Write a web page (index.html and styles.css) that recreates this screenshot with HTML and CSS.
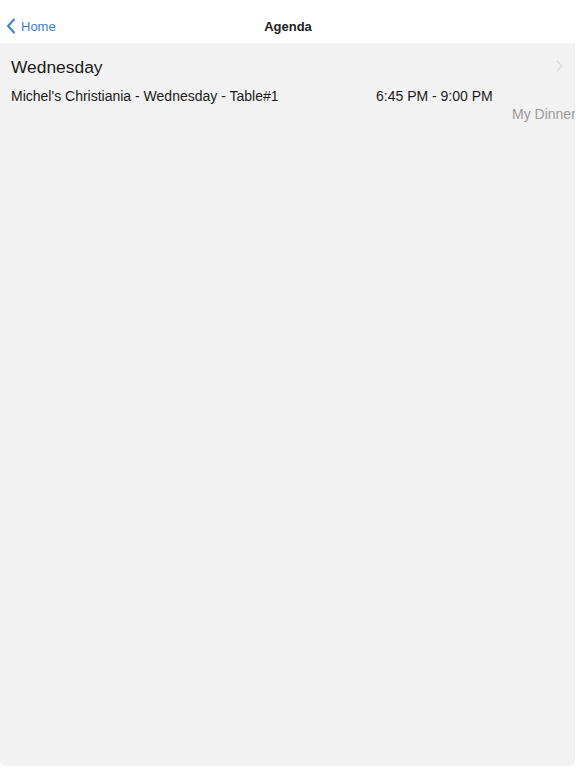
FILE: index.html
```html
<!DOCTYPE html>
<html>
<head>
<meta charset="utf-8">
<link rel="stylesheet" href="styles.css">
</head>
<body>
<div class="screen">
  <header class="nav">
    <div class="back">
      <svg class="chev" width="10" height="16" viewBox="0 0 10 16"><path d="M8 1.5 L2 8 L8 14.5" fill="none" stroke="#3b7fd0" stroke-width="2" stroke-linecap="round" stroke-linejoin="round"/></svg>
      <span>Home</span>
    </div>
    <div class="title">Agenda</div>
  </header>
  <main class="content">
    <div class="day">
      <span class="day-name">Wednesday</span>
      <svg class="disc" width="7" height="12" viewBox="0 0 7 12"><path d="M1 1 L6 6 L1 11" fill="none" stroke="#d4d4d4" stroke-width="1.2"/></svg>
    </div>
    <div class="item">
      <span class="item-name">Michel's Christiania - Wednesday - Table#1</span>
      <span class="item-time">6:45 PM - 9:00 PM</span>
    </div>
    <div class="tag">My Dinner</div>
  </main>
</div>
</body>
</html>
```
FILE: styles.css
```css
html, body { margin: 0; padding: 0; background: #fff; }
body { font-family: "Liberation Sans", Arial, sans-serif; width: 576px; height: 768px; overflow: hidden; }
.screen { display: flex; flex-direction: column; height: 768px; }
.nav { height: 43px; position: relative; display: flex; align-items: center; justify-content: center; background: #fff; flex: none; }
.back { position: absolute; left: 6px; top: 18px; display: flex; align-items: center; gap: 5px; color: #3b7fd0; font-size: 13px; }
.chev { display: block; }
.title { font-size: 13px; font-weight: bold; color: #222; margin-top: 10px; }
.content { flex: 1; background: #f2f2f2; width: 575px; margin-bottom: 2px; border-radius: 0 0 6px 6px; overflow: hidden; }
.day { display: flex; justify-content: space-between; align-items: center; padding: 14px 12px 0 11px; height: 20px; }
.day-name { font-size: 17.4px; color: #1a1a1a; }
.disc { display: block; margin-top: -2px; }
.item { display: flex; padding: 11px 0 0 11px; font-size: 14px; color: #1a1a1a; }
.item-name { width: 365px; }
.tag { font-size: 14px; color: #9a9a9a; padding-left: 512px; white-space: nowrap; margin-top: 2px; }
```
